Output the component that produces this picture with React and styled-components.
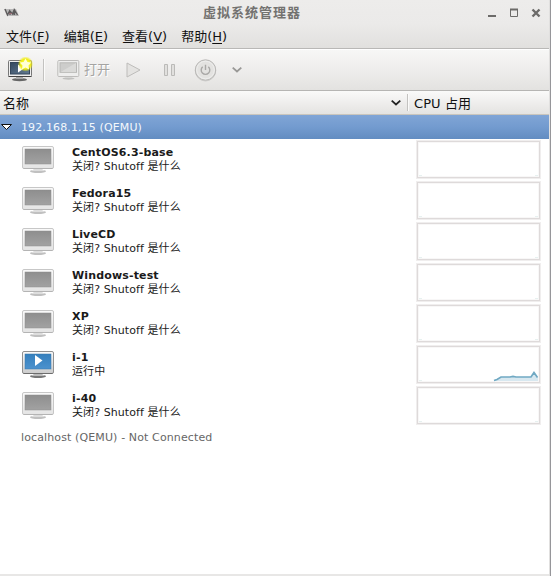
import React from 'react';
import styled, { createGlobalStyle } from 'styled-components';

const Global = createGlobalStyle`
  * { box-sizing: border-box; }
  body {
    margin: 0;
    background: #fff;
    font-family: "DejaVu Sans", "Noto Sans CJK SC", sans-serif;
    cursor: default;
  }
  svg { display: block; flex: none; }
`;

const Window = styled.div`
  display: flex;
  flex-direction: column;
  width: 551px;
  height: 576px;
  overflow: hidden;
  background: #fff;
  border-right: 1px solid #96969a;
  box-shadow: inset -1px 0 #e1e0df;
  padding-right: 1px;
`;

const Chrome = styled.header`
  height: 49px;
  flex: none;
  background: linear-gradient(#edeceb 0, #ebeae9 24px, #e1e0de 48px);
  border-bottom: 1px solid #b9b8b6;
`;

const TitleBar = styled.div`
  display: flex;
  align-items: center;
  height: 25px;
  padding: 0 7px 0 4px;
`;

const Title = styled.h1`
  flex: 1;
  margin: 0 0 0 3px;
  padding-left: 181px;
  font-size: 13px;
  line-height: 25px;
  letter-spacing: 1px;
  font-weight: 700;
  color: #737270;
  white-space: nowrap;
`;

const WindowButtons = styled.div`
  display: flex;
  gap: 10px;
`;

const MenuBar = styled.nav`
  display: flex;
  gap: 14px;
  height: 23px;
  padding-left: 6px;
  font-size: 13px;
  line-height: 23px;
  color: #111;
`;

const MenuItem = styled.span`
  white-space: nowrap;
  u { text-underline-offset: 2px; text-decoration-thickness: 1px; }
`;

const ToolBar = styled.div`
  display: flex;
  align-items: center;
  height: 42px;
  flex: none;
  padding: 0 0 1px 7px;
  background: linear-gradient(#f7f7f6, #eeedec 50%, #e3e2e0);
  border-top: 1px solid #fff;
  border-bottom: 1px solid #b6b5b3;
`;

const Separator = styled.i`
  width: 2px;
  height: ${(p) => p.$h}px;
  background: #c3c2c0;
  border-right: 1px solid #fbfbfa;
  margin: ${(p) => p.$m || 0};
`;

const OpenLabel = styled.span`
  width: 43px;
  padding-left: 4px;
  font-size: 13px;
  line-height: 18px;
  color: #a5a4a2;
  text-shadow: 1px 1px #fff;
  margin-right: 3px;
  white-space: nowrap;
`;

const ToolIcon = styled.span`
  width: ${(p) => p.$w}px;
  flex: none;
`;

const Columns = styled.div`
  display: flex;
  align-items: center;
  height: 24px;
  flex: none;
  font-size: 13px;
  color: #111;
  background: linear-gradient(#fafaf9, #efeeed 50%, #e4e3e1);
  border-bottom: 1px solid #c9c5bd;
`;

const NameColumn = styled.div`
  display: flex;
  align-items: center;
  justify-content: space-between;
  width: 407px;
  padding: 0 5px 0 3px;
`;

const UsageColumn = styled.div`
  padding-left: 5px;
  letter-spacing: 0.1px;
  white-space: nowrap;
`;

const HostRow = styled.div`
  display: flex;
  align-items: center;
  gap: 8px;
  flex: none;
  height: ${(p) => (p.$selected ? 24 : 22)}px;
  font-size: 11px;
  letter-spacing: 0.12px;
  padding-left: ${(p) => (p.$selected ? 0 : 21)}px;
  color: ${(p) => (p.$selected ? '#f4f8fc' : '#666')};
  background: ${(p) => (p.$selected ? 'linear-gradient(#80a5d6, #739bcf 50%, #628cc1)' : 'none')};
`;

const MachineRow = styled.div`
  display: flex;
  align-items: center;
  height: 41px;
  flex: none;
  padding: 0 9px 0 21px;
`;

const MachineText = styled.div`
  flex: 1;
  margin-left: 17px;
  font-size: 11px;
  line-height: 14px;
  letter-spacing: 0.08px;
  color: #1a1a1a;
  white-space: nowrap;
  strong { display: block; letter-spacing: 0.15px; }
`;

const Status = styled.div`
  height: 14px;
`;

const Usage = styled.div`
  width: 123px;
  height: 37px;
  background: #fff;
  border: 1px solid #dedada;
  box-shadow: inset 0 0 0 1px #f8f7f7, 0 0 0 1px #f0eeee;
`;

const Footer = styled.div`
  height: 2px;
  margin-top: auto;
  background: #e8e7e6;
`;

function Monitor({ running }) {
  const id = running ? 'on' : 'off';
  return (
    <svg width="34" height="31" viewBox="0 0 34 31">
      <defs>
        <linearGradient id={`${id}-case`} x2="0" y2="1">
          <stop offset="0" stopColor="#fafafa" />
          <stop offset="1" stopColor={running ? '#cccccc' : '#e4e4e4'} />
        </linearGradient>
        <linearGradient id={`${id}-screen`} x2="0" y2="1">
          <stop offset="0" stopColor={running ? '#347fbd' : '#8e8e8e'} />
          <stop offset="1" stopColor={running ? '#4c92ce' : '#a2a2a2'} />
        </linearGradient>
      </defs>
      <ellipse cx="17" cy="27.2" rx="8" ry="1.7" fill={running ? '#777' : '#c0c0c0'} />
      <path d="M13 24h8l1 2.500H12z" fill={running ? '#bbb' : '#ddd'} />
      <path d="M10.500 26.500h13" stroke={running ? '#bbb' : '#ddd'} />
      <rect x="1.5" y="2.5" width="31" height="22" rx="1.5" fill={`url(#${id}-case)`} stroke={running ? '#909090' : '#c7c7c7'} />
      <path d="M2.5 24.500h29" stroke={running ? '#6d6d6d' : '#b4b4b4'} />
      <rect x="4" y="5" width="26" height="15" fill={`url(#${id}-screen)`} stroke={running ? '#3977aa' : '#8d8d8d'} strokeWidth=".5" />
      {running && <path d="M14 6v11l7.500-5.500z" fill="#fff" />}
    </svg>
  );
}

function NewMachine() {
  return (
    <svg width="26" height="26" viewBox="0 0 26 26">
      <defs>
        <linearGradient id="new-screen" x2="1" y2="1">
          <stop stopColor="#34485f" />
          <stop offset="1" stopColor="#637b93" />
        </linearGradient>
        <radialGradient id="glow">
          <stop stopColor="#ffff50" />
          <stop offset=".65" stopColor="#f2ee16" />
          <stop offset="1" stopColor="#f2ee16" stopOpacity="0" />
        </radialGradient>
      </defs>
      <ellipse cx="12.5" cy="22.7" rx="7.5" ry="1.6" fill="#666" />
      <path d="M9 20h7v2H9z" fill="#aaa" />
      <rect x="1.5" y="3.5" width="23" height="16" rx="1" fill="#eee" stroke="#777" />
      <path d="M1.5 19.5h23" stroke="#444" />
      <rect x="3.5" y="5.5" width="19" height="11.5" fill="url(#new-screen)" stroke="#34465a" />
      <path d="M11 7.5v8l6-4z" fill="#fff" />
      <circle cx="18.5" cy="7" r="7.7" fill="url(#glow)" />
      <path d="m18.5 1.5 1.9 3.4 3.9.7-2.8 2.8.6 4-3.600-1.800-3.600 1.800.6-4-2.800-2.800 3.900-.7z" fill="#ffffd5" />
    </svg>
  );
}

function OpenMonitor() {
  return (
    <svg width="23" height="22" viewBox="0 0 23 22">
      <ellipse cx="11.5" cy="19.500" rx="6" ry="1.2" fill="#c0c0be" />
      <path d="M8 17h7v2H8z" fill="#d6d6d4" />
      <rect x=".8" y="1.500" width="21" height="16" rx="1" fill="#eeeeed" stroke="#bdbcba" />
      <rect x="3" y="3.800" width="16.500" height="9.500" fill="#cdcdcb" stroke="#b8b8b6" />
      <path d="M3.500 13 19 4v9z" fill="#dadad8" />
    </svg>
  );
}

function Power() {
  return (
    <svg width="24" height="24" viewBox="0 0 24 24" fill="none">
      <circle cx="11.500" cy="12.800" r="10.200" stroke="#d0cfcd" />
      <circle cx="11.500" cy="12" r="10.200" fill="#e3e2e0" stroke="#b8b7b5" />
      <circle cx="11.500" cy="12" r="8.800" stroke="#eeeeed" />
      <path d="M8.700 8.800a4.300 4.300 0 1 0 5.600 0M11.500 6.800v5.200" stroke="#a9a8a6" strokeWidth="1.400" />
    </svg>
  );
}

function Chevron({ color }) {
  return (
    <svg width="12" height="8" viewBox="0 0 12 8" fill="none">
      <path d="m1.700 1.700 4.300 3.800 4.300-3.800" stroke={color} strokeWidth="1.800" />
    </svg>
  );
}

function UsageGraph({ active }) {
  return (
    <svg width="121" height="35" viewBox="0 0 121 35" fill="none">
      {active && (
        <>
          <path d="M76 34v-.5l6-3.500h10l3-.7 3 .7h15l3-4.500 4 5V34z" fill="#d8e8f0" />
          <path d="m76 33.500 3-1 4-2.500h9l3-.7 3 .7h15l3-4.500 3.500 5" stroke="#70a9c3" strokeWidth="1.700" />
        </>
      )}
      <path d={active ? 'M1 33.500h3' : 'M1 33.500h3M117 33.500h3'} stroke="#dcebea" strokeWidth=".7" />
    </svg>
  );
}

const menus = [['文件', 'F'], ['编辑', 'E'], ['查看', 'V'], ['帮助', 'H']];
const machines = [
  { name: 'CentOS6.3-base' },
  { name: 'Fedora15' },
  { name: 'LiveCD' },
  { name: 'Windows-test' },
  { name: 'XP' },
  { name: 'i-1', running: true },
  { name: 'i-40' },
];

export default function App() {
  return (
    <>
      <Global />
      <Window>
        <Chrome>
          <TitleBar>
            <svg width="15" height="10" viewBox="0 0 15 10" fill="none">
              <path d="M0 1h12l3 7H3z" fill="#b9b8b8" />
              <path d="m1 1 2.500 6L6 2M6 7V3l2.500 3L10 2v5M10.500 7V2l3 5" stroke="#5c5a5b" strokeWidth="1.300" />
              <path d="M5 5.500h3" stroke="#986b73" />
            </svg>
            <Title>虚拟系统管理器</Title>
            <WindowButtons>
              <svg width="12" height="12" viewBox="0 0 12 12"><path d="M2 8h8v2H2z" fill="#6c6b69" /></svg>
              <svg width="12" height="12" viewBox="0 0 12 12" fill="none"><path d="M2.500 2.500h7v7h-7z" stroke="#6c6b69" /><path d="M2 2.500h8" stroke="#6c6b69" strokeWidth="2" /></svg>
              <svg width="12" height="12" viewBox="0 0 12 12"><path d="m2.500 2.500 7 7m0-7-7 7" stroke="#6c6b69" strokeWidth="2.400" /></svg>
            </WindowButtons>
          </TitleBar>
          <MenuBar>
            {menus.map(([label, key]) => (
              <MenuItem key={key}>{label}(<u>{key}</u>)</MenuItem>
            ))}
          </MenuBar>
        </Chrome>
        <ToolBar>
          <ToolIcon $w={36}><NewMachine /></ToolIcon>
          <Separator $h={22} $m="0 12px 0 0" />
          <OpenMonitor />
          <OpenLabel>打开</OpenLabel>
          <ToolIcon $w={37}>
            <svg width="16" height="16" viewBox="0 0 16 16"><path d="m1 1 13 7-13 7z" fill="#e4e3e1" stroke="#bdbcba" /></svg>
          </ToolIcon>
          <ToolIcon $w={31}>
            <svg width="14" height="14" viewBox="0 0 14 14"><path d="M1.500 1.500h3v11h-3zM8.500 1.500h3v11h-3z" fill="#e1e0de" stroke="#bbbab8" /></svg>
          </ToolIcon>
          <ToolIcon $w={37}><Power /></ToolIcon>
          <Chevron color="#999896" />
        </ToolBar>
        <Columns>
          <NameColumn>名称<Chevron color="#222" /></NameColumn>
          <Separator $h={17} />
          <UsageColumn>CPU 占用</UsageColumn>
        </Columns>
        <HostRow $selected>
          <svg width="13" height="10" viewBox="0 0 13 10"><path d="M1.500 2.500h10L6.500 7.500z" fill="#fff" stroke="#111" /></svg>
          192.168.1.15 (QEMU)
        </HostRow>
        {machines.map((machine) => (
          <MachineRow key={machine.name}>
            <Monitor running={machine.running} />
            <MachineText>
              <strong>{machine.name}</strong>
              <Status>{machine.running ? '运行中' : '关闭? Shutoff 是什么'}</Status>
            </MachineText>
            <Usage><UsageGraph active={machine.running} /></Usage>
          </MachineRow>
        ))}
        <HostRow>localhost (QEMU) - Not Connected</HostRow>
        <Footer />
      </Window>
    </>
  );
}
